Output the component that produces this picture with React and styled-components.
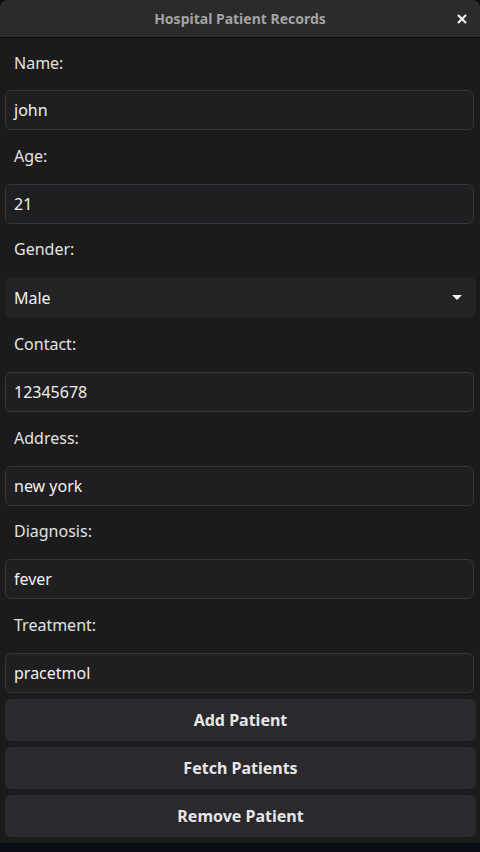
import React from "react";
import styled, { createGlobalStyle } from "styled-components";

const GlobalStyle = createGlobalStyle`
  html, body {
    margin: 0;
    padding: 0;
    background: #0b0d15;
  }
  * {
    box-sizing: border-box;
  }
`;

const Window = styled.div`
  width: 480px;
  height: 843px;
  display: flex;
  flex-direction: column;
  background: #1b1b1b;
  border-radius: 8px 8px 0 0;
  overflow: hidden;
  font-family: "Noto Sans", "Open Sans", sans-serif;
`;

const TitleBar = styled.div`
  position: relative;
  height: 38px;
  flex: none;
  display: flex;
  align-items: center;
  justify-content: center;
  background: #2b2b2b;
  border-bottom: 1px solid #0e0e0e;
  color: #a3a3a3;
  font-size: 14px;
  font-weight: 700;
`;

const CloseButton = styled.button`
  position: absolute;
  right: 10px;
  top: 11px;
  width: 16px;
  height: 16px;
  padding: 0;
  border: none;
  background: transparent;
  display: flex;
  align-items: center;
  justify-content: center;
`;

const Body = styled.div`
  flex: 1;
  display: flex;
  flex-direction: column;
  padding: 0 4px 6px 5px;
`;

const Label = styled.div`
  height: ${(p) => p.$h}px;
  display: flex;
  align-items: center;
  padding-left: 9px;
  padding-bottom: 3px;
  color: #e2e2e2;
  font-size: 16px;
`;

const Entry = styled.div`
  height: 40px;
  margin-right: 2px;
  display: flex;
  align-items: center;
  padding: 0 8px;
  background: #1f1f21;
  border: 1px solid #35353a;
  border-radius: 6px;
  color: #f0f0f0;
  font-size: 16px;
`;

const Combo = styled.div`
  height: 41px;
  display: flex;
  align-items: center;
  justify-content: space-between;
  padding: 0 14px 0 9px;
  background: #232326;
  border-radius: 6px;
  color: #f0f0f0;
  font-size: 16px;
`;

const Buttons = styled.div`
  display: flex;
  flex-direction: column;
  gap: 6px;
  margin-top: 6px;
`;

const Button = styled.button`
  height: 42px;
  border: none;
  border-radius: 6px;
  background: #2a2a2e;
  color: #e6e6e6;
  font-family: inherit;
  font-size: 16px;
  font-weight: 700;
`;

const fields = [
  { label: "Name:", value: "john", h: 52 },
  { label: "Age:", value: "21", h: 54 },
  { label: "Gender:", value: "Male", combo: true, h: 53 },
  { label: "Contact:", value: "12345678", h: 54 },
  { label: "Address:", value: "new york", h: 54 },
  { label: "Diagnosis:", value: "fever", h: 53 },
  { label: "Treatment:", value: "pracetmol", h: 54 },
];

const Arrow = () => (
  <svg width="10" height="6" viewBox="0 0 10 6">
    <path d="M0 0 L10 0 L5 5 Z" fill="#f0f0f0" />
  </svg>
);

export default function App() {
  return (
    <>
      <GlobalStyle />
      <Window>
        <TitleBar>
          Hospital Patient Records
          <CloseButton aria-label="Close">
            <svg width="10" height="10" viewBox="0 0 10 10">
              <path d="M1 1 L9 9 M9 1 L1 9" stroke="#f2f2f2" strokeWidth="2.2" />
            </svg>
          </CloseButton>
        </TitleBar>
        <Body>
          {fields.map((f) => (
            <React.Fragment key={f.label}>
              <Label $h={f.h}>{f.label}</Label>
              {f.combo ? (
                <Combo>
                  {f.value}
                  <Arrow />
                </Combo>
              ) : (
                <Entry>{f.value}</Entry>
              )}
            </React.Fragment>
          ))}
          <Buttons>
            <Button>Add Patient</Button>
            <Button>Fetch Patients</Button>
            <Button>Remove Patient</Button>
          </Buttons>
        </Body>
      </Window>
    </>
  );
}
